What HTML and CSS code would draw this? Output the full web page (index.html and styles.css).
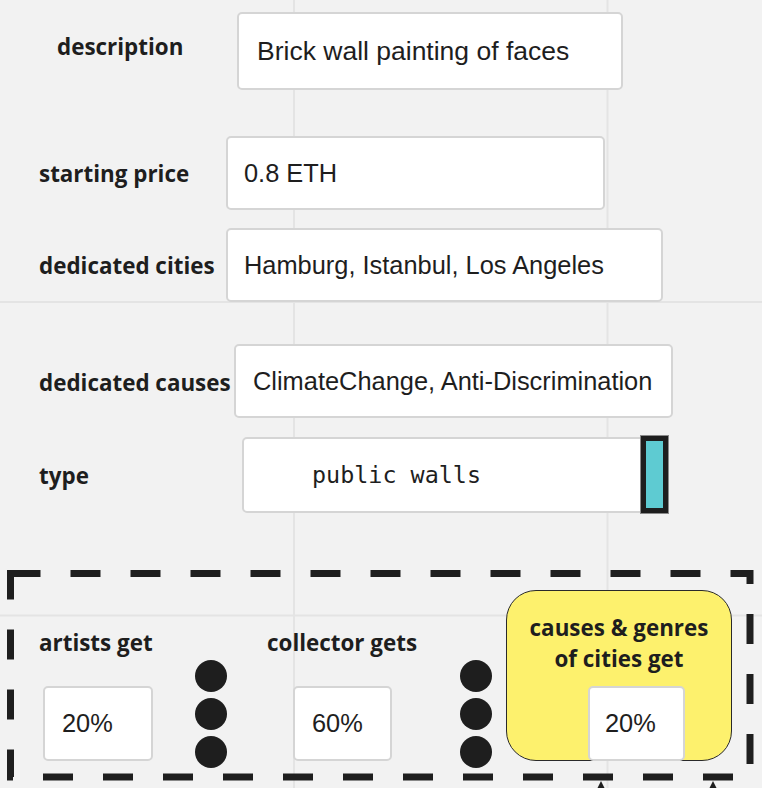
FILE: index.html
```html
<!DOCTYPE html>
<html lang="en">
<head>
<meta charset="utf-8">
<title>Board</title>
<link rel="stylesheet" href="styles.css">
</head>
<body>
<main class="board">
  <div class="label lbl-desc">description</div>
  <div class="field f-desc">Brick wall painting of faces</div>

  <div class="label lbl-price">starting price</div>
  <div class="field f-price">0.8 ETH</div>

  <div class="label lbl-cities">dedicated cities</div>
  <div class="field f-cities">Hamburg, Istanbul, Los Angeles</div>

  <div class="label lbl-causes">dedicated causes</div>
  <div class="field f-causes">ClimateChange, Anti-Discrimination</div>

  <div class="label lbl-type">type</div>
  <div class="field f-type">public walls</div>
  <div class="handle"></div>

  <svg class="frame" width="762" height="788" viewBox="0 0 762 788" aria-hidden="true">
    <rect x="10.5" y="573.5" width="739.5" height="203.5" fill="none" stroke="#1e1e1e" stroke-width="7" stroke-dasharray="30 30"/>
  </svg>

  <div class="label lbl-artists">artists get</div>
  <div class="field pct p-artists">20%</div>
  <div class="dots d1"><span></span><span></span><span></span></div>

  <div class="label lbl-collector">collector gets</div>
  <div class="field pct p-collector">60%</div>
  <div class="dots d2"><span></span><span></span><span></span></div>

  <div class="sticky">causes &amp; genres<br>of cities get</div>
  <div class="field pct p-causes">20%</div>

  <div class="arrow a1"></div>
  <div class="arrow a2"></div>
</main>
</body>
</html>
```

FILE: styles.css
```css
html, body {
  margin: 0;
  padding: 0;
}

body {
  background: #f2f2f2;
  overflow: hidden;
}

.board {
  position: relative;
  width: 762px;
  height: 788px;
  overflow: hidden;
  background-color: #f2f2f2;
  background-image:
    linear-gradient(to right, #e4e4e4 2px, transparent 2px),
    linear-gradient(to bottom, #e4e4e4 2px, transparent 2px);
  background-size: 313.5px 313.5px;
  background-position: 293px 301px;
}

.label {
  position: absolute;
  height: 40px;
  display: flex;
  align-items: center;
  font-family: "Open Sans", "Noto Sans", sans-serif;
  font-weight: 700;
  font-size: 22.4px;
  color: #1e1e1e;
  white-space: nowrap;
}

.field {
  position: absolute;
  box-sizing: border-box;
  display: flex;
  align-items: center;
  background: #fff;
  border: 2px solid #d5d5d5;
  border-radius: 5px;
  font-family: "Liberation Sans", Arial, sans-serif;
  font-size: 25.4px;
  color: #1e1e1e;
  white-space: nowrap;
}

.lbl-desc { left: 57px; top: 26px; }
.f-desc { left: 237px; top: 12px; width: 386px; height: 78px; padding-left: 18px; font-size: 26.5px; }

.lbl-price { left: 39px; top: 153px; }
.f-price { left: 226px; top: 136px; width: 379px; height: 74px; padding-left: 16px; }

.lbl-cities { left: 39px; top: 245px; }
.f-cities { left: 226px; top: 228px; width: 437px; height: 74px; padding-left: 16px; }

.lbl-causes { left: 39px; top: 362px; }
.f-causes { left: 234px; top: 344px; width: 439px; height: 74px; padding-left: 17px; }

.lbl-type { left: 39px; top: 455px; }
.f-type {
  left: 242px; top: 437px; width: 402px; height: 76px; padding-left: 68px;
  font-family: "DejaVu Sans Mono", "Liberation Mono", monospace;
  font-size: 23.4px;
  border-radius: 5px 0 0 5px;
}

.handle {
  position: absolute;
  left: 641px;
  top: 436px;
  width: 27px;
  height: 77px;
  box-sizing: border-box;
  background: #5ecbd2;
  border: 5px solid #1e1e1e;
  box-shadow: 0 0 0 1px #8a8a8a;
}

.frame {
  position: absolute;
  left: 0;
  top: 0;
}

.lbl-artists { left: 39px; top: 622px; }
.lbl-collector { left: 267px; top: 622px; }

.pct { height: 75px; top: 686px; }
.p-artists { left: 43px; width: 110px; padding-left: 17px; }
.p-collector { left: 293px; width: 99px; padding-left: 17px; }
.p-causes { left: 588px; width: 97px; padding-left: 15px; }

.dots {
  position: absolute;
  top: 660px;
  display: flex;
  flex-direction: column;
  gap: 6px;
}
.dots span {
  display: block;
  width: 32px;
  height: 32px;
  border-radius: 50%;
  background: #1e1e1e;
}
.d1 { left: 195px; }
.d2 { left: 460px; }

.sticky {
  position: absolute;
  left: 506px;
  top: 590px;
  width: 226px;
  height: 171px;
  box-sizing: border-box;
  padding-top: 21px;
  background: #fdf16d;
  border: 1px solid #2a2a2a;
  border-radius: 30px;
  font-family: "Open Sans", "Noto Sans", sans-serif;
  font-weight: 700;
  font-size: 22.4px;
  line-height: 31px;
  text-align: center;
  color: #1e1e1e;
}

.arrow {
  position: absolute;
  top: 781px;
  width: 0;
  height: 0;
  border-left: 4px solid transparent;
  border-right: 4px solid transparent;
  border-bottom: 8px solid #1e1e1e;
}
.a1 { left: 597px; }
.a2 { left: 709px; }
```
